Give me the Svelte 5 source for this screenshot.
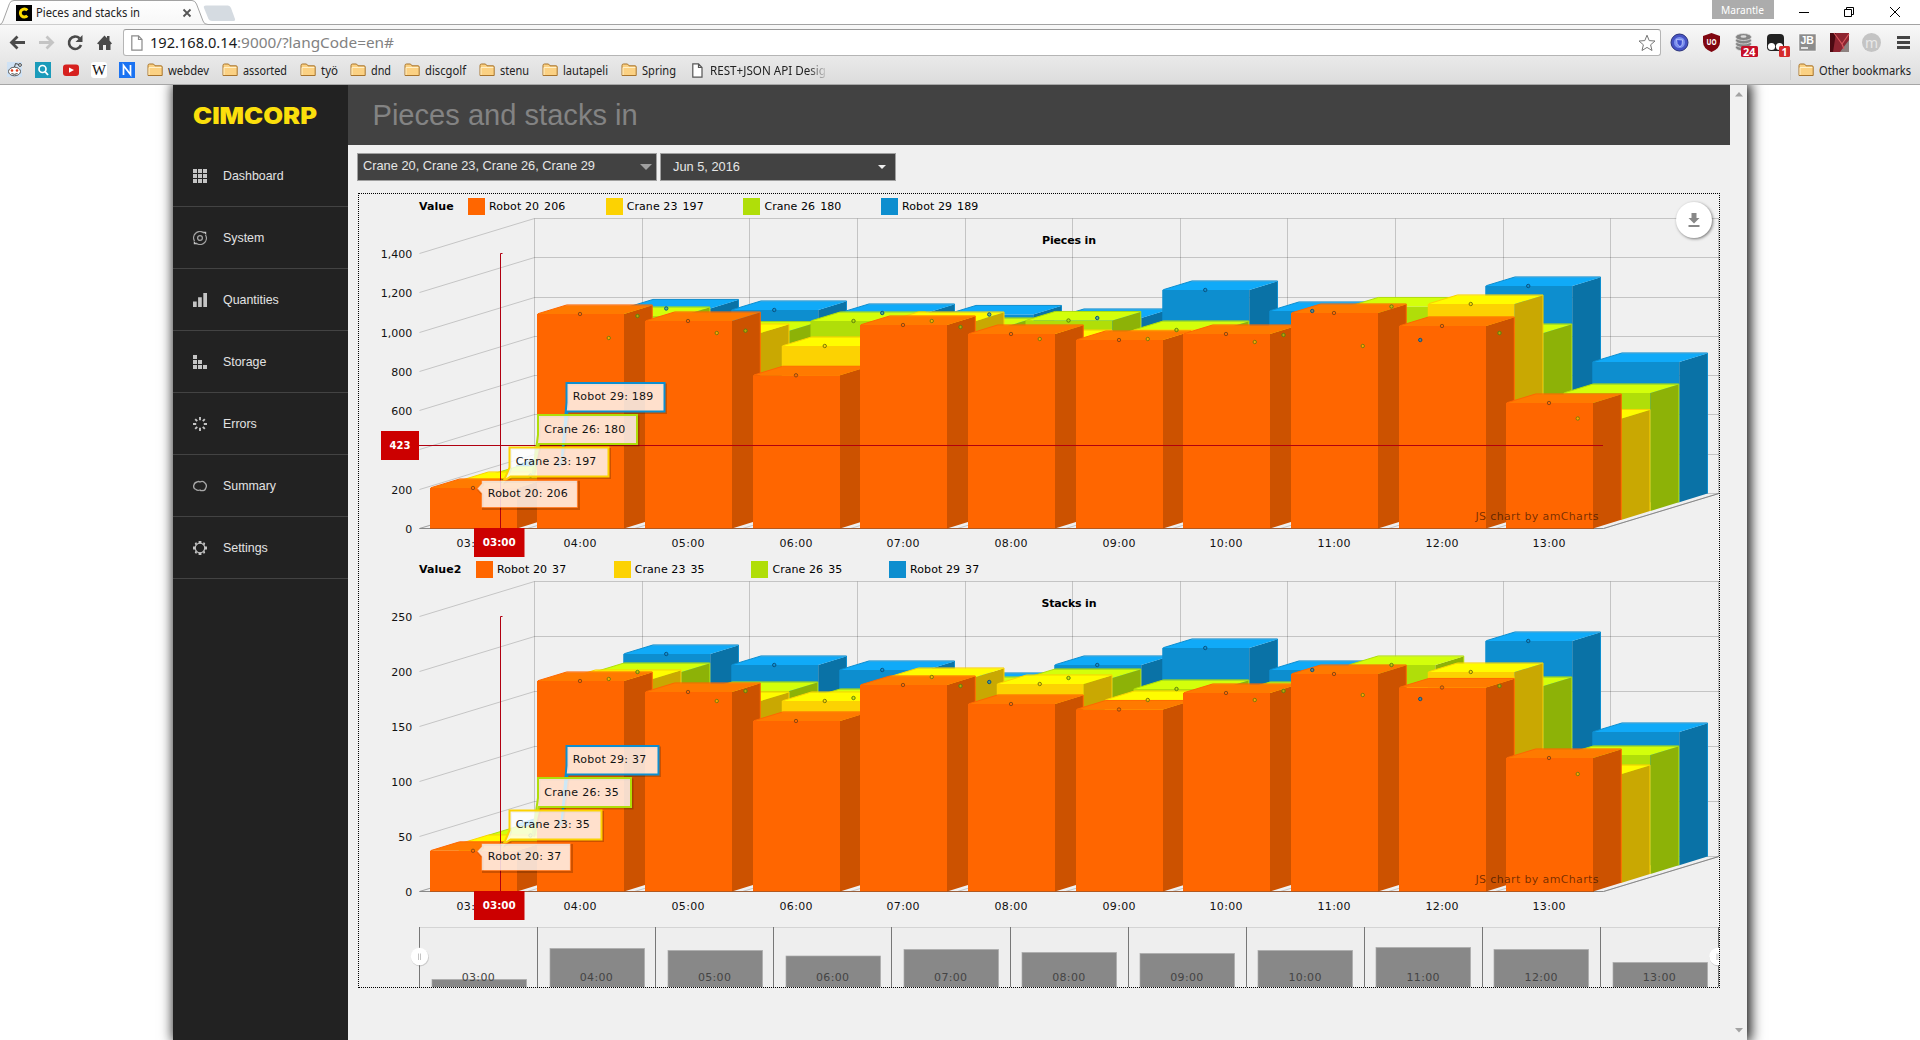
<script>
  const cols = [430, 537, 645, 753, 860, 968, 1076, 1183, 1291, 1399, 1506];
  const grid = [534.5, 642.5, 749.5, 857.5, 965.5, 1072.5, 1180.5, 1287.5, 1395.5, 1503.5, 1610.5, 1718.5];
  const hours = ['03:00', '04:00', '05:00', '06:00', '07:00', '08:00', '09:00', '10:00', '11:00', '12:00', '13:00'];
  const W = 87, DX = 28.75, DY = 8.75, BASE = 528.5, SPAN = 275;

  // front to back
  const series = [
    { name: 'Robot 20', front: '#ff6600', top: '#ff7a00', side: '#cc5200', dot: '#8f4a10' },
    { name: 'Crane 23', front: '#fcd202', top: '#fffc00', side: '#c9a802', dot: '#7d7a08' },
    { name: 'Crane 26', front: '#b0de09', top: '#d3ff0b', side: '#8db207', dot: '#5d8010' },
    { name: 'Robot 29', front: '#0d8ecf', top: '#10aaf8', side: '#0a72a6', dot: '#0b5482' }
  ];
  const order = [3, 2, 1, 0];

  const charts = [
    {
      label: 'Value', title: 'Pieces in', titleW: 54, max: 1400, step: 200, values: [206, 197, 180, 189], marker: 423,
      tops: [
        [488, 314, 321, 375.3, 325, 334, 340, 334, 313, 326, 403],
        [481, 338, 333, 346, 321, 339, 339, 342, 346, 304, 418.5],
        [475.6, 316, 330.7, 321, 327, 320.5, 330, 335, 306.5, 333, 393],
        [465, 308.5, 310, 313, 314.5, 318, 290, 311, 340, 286, 362]
      ],
      balloonW: [96, 99, 99, 98],
      balloonText: [80, 80.5, 81, 80.5]
    },
    {
      label: 'Value2', title: 'Stacks in', titleW: 55, max: 250, step: 50, values: [37, 35, 35, 37], marker: null,
      tops: [
        [487.8, 318, 329, 358, 322, 341, 346.5, 330, 311, 324.5, 395],
        [481, 316, 338, 338, 314, 321, 337, 337, 332, 309, 411],
        [472.5, 309, 328, 335, 323, 315, 326, 328, 302, 323, 392],
        [461.5, 291, 302, 307, 319, 302, 285, 307, 336, 278, 369]
      ],
      balloonW: [89, 92, 93, 92],
      balloonText: [73.5, 74, 74.5, 73.5]
    }
  ];
  const balloons = [
    { x: 481.5, y: 480.5, h: 27 },
    { x: 509.5, y: 447.5, h: 29 },
    { x: 538, y: 415, h: 29 },
    { x: 566.5, y: 383, h: 28.5 }
  ];
  const ticks = (c) => Array.from({ length: c.max / c.step + 1 }, (_, i) => ({
    v: i * c.step,
    y: Math.round(BASE - (i * c.step * SPAN) / c.max - 0.5) + 0.5
  }));
  const tail = (b, w, k, tx, ty) =>
    k === 0
      ? `M${b.x} ${b.y}H${b.x + w}V${b.y + b.h}H${b.x}V${b.y + 13}L${tx + 2} ${ty + 0.5}L${b.x} ${b.y + 3}Z`
      : `M${b.x} ${b.y}H${b.x + w}V${b.y + b.h}H${b.x + 1}L${tx} ${ty}L${b.x} ${b.y + b.h - 9}Z`;

  const scrollTops = [980, 949, 951, 956.5, 950, 953, 954, 951, 948, 950, 963];
  const menu = ['Dashboard', 'System', 'Quantities', 'Storage', 'Errors', 'Summary', 'Settings'];
  const marks = [
    ['webdev', 41, 13], ['assorted', 44, 13], ['työ', 17, 12], ['dnd', 20, 13],
    ['discgolf', 41, 13], ['stenu', 29, 13], ['lautapeli', 45, 13], ['Spring', 34, 16]
  ];
</script>

{#snippet fit(text, w, size, fill = '#222')}
  <svg class="fit" width={w + 1} height="20"><text x="0" y="14.5" font-size={size} {fill} textLength={w} lengthAdjust="spacingAndGlyphs">{text}</text></svg>
{/snippet}

{#snippet folder()}
  <svg class="ic" width="16" height="16" viewBox="0 0 16 16">
    <path d="M1 13.5V3.5Q1 2 2.500 2H6.500L8 3.800H14Q15.200 3.800 15.200 5V13.500H1Z" fill="#fbd183" stroke="#a8742c" />
    <path d="M2 13V5.500H14.300" fill="none" stroke="#fff0c8" />
  </svg>
{/snippet}

<div class="browser">
  <div class="tabs">
    <svg width="240" height="25" viewBox="0 0 240 25">
      <defs><linearGradient id="tabfill" x1="0" y1="0" x2="0" y2="1"><stop offset="0" stop-color="#fff" /><stop offset="1" stop-color="#f7f7f7" /></linearGradient></defs>
      <path d="M0 24.500Q2 24 3 21L9.500 3.500Q10.500.5 14 .5H192Q195 .5 196.500 4L203 21Q204 24.500 208 24.500H240V25H0Z" fill="url(#tabfill)" stroke="#a3a3a3" />
      <path d="M206 5.500H228Q230 5.500 231 8L235 19Q235.500 21 233 21H212Q209.500 21 208.500 19L204 8Q203 5.500 206 5.500Z" fill="#d5dbe1" />
      <rect x="16" y="5" width="16" height="16" fill="#000" />
      <path d="M27.300 10.300A4 4 0 1 0 27.300 15.700" fill="none" stroke="#fddb00" stroke-width="2.900" />
      <path d="M183.500 9.500L190.500 16.500M190.500 9.500L183.500 16.500" stroke="#555" stroke-width="1.800" />
      <text x="36" y="17" font-size="12" fill="#222" textLength="104" lengthAdjust="spacingAndGlyphs">Pieces and stacks in</text>
    </svg>
    <div class="grow strip"></div>
    <div class="strip badge-cell"><span class="user">{@render fit('Marantle', 43, 11.5, '#fff')}</span></div>
    <div class="strip controls">
      <svg width="146" height="24" viewBox="0 0 146 24" fill="none" stroke="#000">
        <path d="M25 12.500H35M70.500 9.500H77.500V16.500H70.500ZM72.500 9.500V7.500H79.500V14.500H77.500M116 7L126 17M126 7L116 17" />
      </svg>
    </div>
  </div>

  <div class="toolbar">
    <svg width="123" height="32" viewBox="0 25 123 32">
      <path d="M25 42.500H12M17.500 36.500L11.500 42.500L17.500 48.500" fill="none" stroke="#4a4a4a" stroke-width="2.800" />
      <path d="M39 42.500H52M46.500 36.500L52.500 42.500L46.500 48.500" fill="none" stroke="#c4c4c4" stroke-width="2.800" />
      <path d="M79.500 38.300A6.200 6.200 0 1 0 81 45" fill="none" stroke="#4a4a4a" stroke-width="2.600" />
      <path d="M82.500 35V42H75.500Z" fill="#4a4a4a" />
      <path d="M97 43.500L104.500 35.500L107 38V36H109.500V40.500L112 43.500L110.500 44.500V50H106V45H103V50H99V44.500Z" fill="#4a4a4a" />
    </svg>
    <div class="omnibox">
      <svg width="12" height="16" viewBox="0 0 12 16"><path d="M.8.8H7.500L11 4.500V15.200H.8ZM7.500.8V4.500H11" fill="#fff" stroke="#8a8a8a" stroke-width="1.200" /></svg>
      <svg class="url" width="250" height="24"><text y="17" font-size="15" fill="#1a1a1a" textLength="87" lengthAdjust="spacingAndGlyphs">192.168.0.14</text><text x="87" y="17" font-size="15" fill="#828282" textLength="157" lengthAdjust="spacingAndGlyphs">:9000/?langCode=en#</text></svg>
      <span class="grow"></span>
      <svg width="18" height="18" viewBox="0 0 18 18"><path d="M9 1.200L11.200 6.600L17 7L12.600 10.800L14 16.500L9 13.400L4 16.500L5.400 10.800L1 7L6.800 6.600Z" fill="#fff" stroke="#777" /></svg>
    </div>
    <svg width="259" height="32" viewBox="1661 25 259 32">
      <circle cx="1679.500" cy="42.500" r="8.500" fill="#4653c4" stroke="#273079" />
      <circle cx="1679.500" cy="42.500" r="5.500" fill="#7d92ee" />
      <path d="M1676.500 39.500L1682.500 40Q1683 45 1680 47Q1676 44 1676.500 39.500Z" fill="#3c4fd0" stroke="#c8d0ff" stroke-width=".8" />
      <path d="M1711.500 33L1720 36V42Q1720 48.500 1711.500 52Q1703 48.500 1703 42V36Z" fill="#800610" />
      <text x="1706.500" y="45.300" font-size="8.500" font-weight="700" fill="#fff" textLength="10" lengthAdjust="spacingAndGlyphs">UO</text>
      <g fill="#858585" stroke="#e0e0e0" stroke-width=".8">
        <ellipse cx="1743.500" cy="47.500" rx="8" ry="3.500" /><ellipse cx="1743.500" cy="44" rx="8" ry="3.500" /><ellipse cx="1743.500" cy="40.500" rx="8" ry="3.500" /><ellipse cx="1743.500" cy="37" rx="8" ry="3.500" />
      </g>
      <ellipse cx="1743.500" cy="36.500" rx="3" ry="1.200" fill="#ddd" />
      <rect x="1741" y="46" width="17" height="11" rx="1.500" fill="#c60f28" />
      <text x="1743" y="55.500" font-size="10.500" font-weight="700" fill="#fff" textLength="12.500" lengthAdjust="spacingAndGlyphs">24</text>
      <rect x="1767" y="34" width="17" height="17" rx="4" fill="#222" />
      <circle cx="1771.500" cy="46.500" r="3.600" fill="#fff" /><circle cx="1779.500" cy="46.500" r="3.600" fill="#fff" />
      <rect x="1779" y="46" width="11" height="11" rx="1.500" fill="#d52b2b" />
      <text x="1781.500" y="55.500" font-size="10.500" font-weight="700" fill="#fff">1</text>
      <rect x="1799" y="34" width="17" height="17" fill="#8c8c8c" stroke="#fff" stroke-width=".5" />
      <text class="sans" x="1800.500" y="44" font-size="10" font-weight="700" fill="#fff" textLength="13.500" lengthAdjust="spacingAndGlyphs">JB</text>
      <path d="M1801 48H1808" stroke="#fff" stroke-width="1.500" />
      <rect x="1830" y="33" width="19" height="19" fill="#8d2430" />
      <path d="M1840 52L1849 40V52Z" fill="#8e8280" /><path d="M1830 33H1836L1833 52H1830Z" fill="#4b0a12" />
      <path d="M1834 33L1842 44M1849 34L1842 44M1842 44L1844 49" stroke="#d8565c" fill="none" stroke-width="1.200" />
      <circle cx="1871.500" cy="42.500" r="9.500" fill="#c4c4c4" />
      <text x="1871.500" y="47.500" font-size="14" text-anchor="middle" fill="#e8e8e8">m</text>
      <path d="M1897 37.500H1910M1897 42.500H1910M1897 47.500H1910" stroke="#444" stroke-width="3" />
    </svg>
  </div>

  <div class="bookmarks">
    <svg class="sites" width="147" height="18" viewBox="0 61 147 18">
      <rect x="7" y="62" width="15" height="15" fill="#cfe2f5" />
      <ellipse cx="14.500" cy="71.500" rx="6" ry="4.300" fill="#fff" stroke="#555" /><circle cx="12" cy="70.500" r="1.300" fill="#e0391b" /><circle cx="17" cy="70.500" r="1.300" fill="#e0391b" />
      <path d="M11.500 73.500Q14.500 75.200 17.500 73.500M14.500 67L15.500 63.500L19 64.500" fill="none" stroke="#444" /><circle cx="20" cy="65" r="1.400" fill="#fff" stroke="#444" />
      <rect x="35" y="62" width="16" height="16" fill="#1b9bba" /><circle cx="42.500" cy="69" r="3.500" fill="none" stroke="#fff" stroke-width="1.700" /><path d="M45 71.500L48 75" stroke="#fff" stroke-width="1.900" />
      <rect x="63" y="64.500" width="16" height="11.500" rx="3" fill="#d6211f" /><path d="M69 67.500V72.700L74 70Z" fill="#fff" />
      <rect x="91" y="62" width="16" height="16" rx="3" fill="#fff" /><text class="serif" x="92" y="75" font-size="14" fill="#111" textLength="14" lengthAdjust="spacingAndGlyphs">W</text>
      <rect x="119" y="62" width="16" height="16" fill="#1b73f2" /><path d="M123.500 75V65.500L130.500 74.500V65" fill="none" stroke="#fff" stroke-width="1.700" />
    </svg>
    {#each marks as [name, w, gap]}
      <span class="mark" style:margin-right="{gap - 1}px">{@render folder()}{@render fit(name, w, 12)}</span>
    {/each}
    <svg width="11" height="15" viewBox="0 0 11 15"><path d="M.8.800H6.500L10 4.500V14.200H.8ZM6.500.8V4.500H10" fill="#fff" stroke="#555" stroke-width="1.200" /></svg>
    <span class="fade">{@render fit('REST+JSON API Desig', 116, 12)}</span>
    <span class="grow"></span>
    <span class="other">{@render folder()}{@render fit('Other bookmarks', 92, 12)}</span>
  </div>
</div>

<div class="viewport">
  <div class="page">
    <nav>
      <div class="logo"><svg width="125" height="20"><text x="0" y="18" textLength="124" lengthAdjust="spacingAndGlyphs">CIMCORP</text></svg></div>
      {#each menu as item, i}
        <div class="item">
          <svg width="14" height="14" viewBox="0 0 14 14" fill="#c4c4c4" stroke="none">
            {#if i === 0}
              <path d="M0 0H4V4H0ZM5 0H9V4H5ZM10 0H14V4H10ZM0 5H4V9H0ZM5 5H9V9H5ZM10 5H14V9H10ZM0 10H4V14H0ZM5 10H9V14H5ZM10 10H14V14H10Z" />
            {:else if i === 1}
              <g fill="none" stroke="#a4a4a4" stroke-width="1.300"><circle cx="7" cy="7" r="2.400" /><path d="M1.500 10A6.300 6.300 0 0 1 11 2M12.500 4A6.300 6.300 0 0 1 3 12" /></g>
              <path d="M10 0.800H13.200V4ZM.8 10V13.200H4Z" />
            {:else if i === 2}
              <path d="M0 8.500H3.700V14H0ZM5.100 4.200H8.800V14H5.100ZM10.300 0H14V14H10.300Z" />
            {:else if i === 3}
              <path d="M0 0H4V4H0ZM0 5H4V9H0ZM5 5H9V9H5ZM0 10H4V14H0ZM5 10H9V14H5ZM10 10H14V14H10Z" />
            {:else if i === 4}
              <path d="M7 0V3.200M7 10.800V14M0 7H3.200M10.800 7H14M2.200 2.200L4.200 4.200M9.800 9.800L11.800 11.800M11.800 2.200L9.800 4.200M4.200 9.800L2.200 11.800" stroke="#c4c4c4" stroke-width="1.900" />
            {:else if i === 5}
              <path d="M4 3Q5.500 2 7 3Q9.500 1.500 11.500 3.500Q14.500 6 12.800 9Q12 12 9.500 11.500Q8 12 7 11Q4.500 12 3 10.500Q0 9.500 .8 6.500Q1.300 3.500 4 3Z" fill="none" stroke="#a8a8a8" stroke-width="1.300" />
            {:else}
              <circle cx="7" cy="7" r="4.800" fill="none" stroke="#bbb" stroke-width="1.300" />
              <path d="M5.600 0H8.400V2.600H5.600ZM5.600 11.400H8.400V14H5.600ZM0 5.600H2.600V8.400H0ZM11.400 5.600H14V8.400H11.400ZM1.800 2L3.500 1.200L4 3.200L2.200 4ZM12.200 2L10.500 1.200L10 3.200L11.800 4ZM1.800 12L3.500 12.800L4 10.800L2.200 10ZM12.200 12L10.500 12.800L10 10.800L11.800 10Z" />
            {/if}
          </svg>
          <span>{item}</span>
        </div>
      {/each}
    </nav>

    <main>
      <header>Pieces and stacks in</header>
      <div class="filters">
        <div class="select cranes"><span>Crane 20, Crane 23, Crane 26, Crane 29</span><i></i></div>
        <div class="select date"><span>Jun 5, 2016</span><i></i></div>
      </div>

      <div class="panel">
        {#each charts as c, ci}
          <div class="legend" class:second={ci === 1}>
            <b>{c.label}</b>
            {#each series as s, k}
              <span class="entry"><i style:background={s.front}></i>{s.name}<em>{c.values[k]}</em></span>
            {/each}
          </div>
          <svg class="plot" width="1360" height="339" viewBox="359 218 1360 339">
            <g class="grid">
              {#each ticks(c) as t}
                <path d="M419.500 {t.y}L534.500 {t.y - 35}H1719" />
                <text class="num" x="412.300" y={t.y + 4} text-anchor="end">{t.v.toLocaleString('en-US')}</text>
              {/each}
              {#each grid as x}
                <path d="M{x} 218.500V493.500L{x - 115} 528.500" />
              {/each}
            </g>
            <path class="axis" d="M419.500 528.500H1603.500L1719 493.500" />
            {#each order as k}
              {@const s = series[k]}
              {#each cols as cx, i}
                {@const x = cx + k * DX}
                {@const y = c.tops[k][i]}
                {@const b = BASE - k * DY}
                <path d="M{x} {y}H{x + W}V{b}H{x}Z" fill={s.front} />
                <path d="M{x + W} {y}l{DX - 0.5} {-DY}V{b - DY}L{x + W} {b}Z" fill={s.side} />
                <path d="M{x} {y}l{DX} {-DY}h{W}l{-DX} {DY}Z" fill={s.top} />
                <path d="M{x + 1} {y - 0.3}l{DX} {-DY}h{W - 1.5}V{b - DY}" fill="none" stroke={s.front} stroke-width="1" />
              {/each}
            {/each}
            <path d="M430 528.500H1594" stroke="#a84000" stroke-opacity=".55" />
            {#each order as k}
              {#each cols as cx, i}
                {@const x = cx + k * DX + 43}
                {#if x < 1604}
                  <circle cx={x} cy={c.tops[k][i]} r="1.700" fill={series[k].front} fill-opacity=".6" stroke={series[k].dot} stroke-width="1" />
                {/if}
              {/each}
            {/each}
            {#each cols as cx, i}
              <text class="num" x={cx + 43} y="546.500" text-anchor="middle" textLength="33">{hours[i]}</text>
            {/each}
            <text class="title" x="1069" y="243.500" text-anchor="middle" textLength={c.titleW}>{c.title}</text>
            <text class="credit" x="1475.500" y="519.500" textLength="123">JS chart by amCharts</text>
            <path class="cursor" d="M502.500 253.500H500.500V528" />
            {#if c.marker}
              <path class="cursor" d="M419 445.500H1603" />
              <rect x="381" y="431" width="38" height="29" fill="#c00" />
              <text class="flag" x="400" y="448.500" text-anchor="middle" textLength="21" lengthAdjust="spacingAndGlyphs">{c.marker}</text>
            {/if}
            <rect x="474" y="528" width="50.500" height="29" fill="#c00" />
            <text class="flag" x="499.300" y="545.700" text-anchor="middle" textLength="33" lengthAdjust="spacingAndGlyphs">03:00</text>
            {#each order as k}
              {@const b = balloons[k]}
              {@const w = c.balloonW[k]}
              {@const d = tail(b, w, k, 473 + k * DX + 2, c.tops[k][0])}
              <path {d} class="shadow" transform="translate(1.5 1.500)" />
              <path {d} fill="#fff" fill-opacity=".8" stroke={series[k].front} stroke-width={k === 0 ? 1.2 : 2} stroke-opacity={k === 0 ? 0.55 : 1} />
              <text class="num" x={b.x + 6.3} y={b.y + b.h / 2 + 3} textLength={c.balloonText[k]}>{series[k].name}: {c.values[k]}</text>
            {/each}
          </svg>
        {/each}

        <svg class="overview" width="1360" height="67" viewBox="359 920 1360 67">
          <rect x="419.500" y="927" width="1300" height="60" fill="#eee" />
          <path d="M419.500 927.500H1719" stroke="#d4d4d4" />
          {#each hours as h, i}
            {@const x = 419.5 + i * 118.1}
            <rect x={Math.round(x + 12)} y={scrollTops[i] - 0.5} width="94.500" height="50" fill="#888" stroke="#aaa" stroke-width=".7" />
            <path d="M{Math.floor(x) + 0.5} 927V987" stroke="#777" />
            <text class="num dim" x={x + 58.7} y="981" text-anchor="middle" textLength="33">{h}</text>
          {/each}
          <path d="M1718.500 927V987" stroke="#777" />
          {#each [419.5, 1718] as x}
            <circle cx={x + 0.5} cy="957.500" r="9" fill="#000" fill-opacity=".14" />
            <circle cx={x} cy="956.500" r="8.700" fill="#fff" />
            <path d="M{x - 1} 953.500V960M{x + 1} 953.500V960" stroke="#c4c4c4" />
          {/each}
        </svg>
        <button class="export" aria-label="Download">
          <svg width="12" height="15" viewBox="0 0 12 15" fill="#888"><path d="M3.500 0H8.500V5H11.500L6 10.500L.5 5H3.500ZM.5 12H11.500V14H.5Z" /></svg>
        </button>
      </div>
    </main>

    <div class="scroll">
      <svg width="8" height="5"><path d="M0 4.500L4 0L8 4.500Z" fill="#a3a3a3" /></svg>
      <svg width="8" height="5"><path d="M0 0L4 4.500L8 0Z" fill="#a3a3a3" /></svg>
    </div>
  </div>
</div>

<style>
  :global(body) { background: #fff; overflow: hidden; font-family: 'Liberation Sans', Arial, sans-serif; }
  svg { display: block; flex: none; }
  .fit, .url, .logo svg { overflow: visible; }
  .grow { flex: 1; }
  .browser { height: 85px; box-sizing: border-box; border-bottom: 1px solid #a6a6a6; font-family: 'Noto Sans', sans-serif; background: linear-gradient(#fff 0, #fff 24px, #f8f8f8 25px, #dcdcdc 84px); }
  .tabs { display: flex; height: 25px; }
  .strip { border-bottom: 1px solid #a3a3a3; background: #fff; }
  .badge-cell { width: 62px; }
  .user { display: flex; justify-content: center; height: 19px; background: #acacac; }
  .user .fit { margin-top: -1.500px; }
  .controls { width: 146px; }
  .toolbar { display: flex; height: 32px; }
  .omnibox { display: flex; align-items: center; flex: 1; height: 27px; margin-top: 4px; box-sizing: border-box; padding: 0 4px 0 7px; background: #fff; border: 1px solid #b5b5b5; border-top-color: #999; border-radius: 3px; }
  .url { margin-left: 7px; }
  .serif { font-family: 'Liberation Serif', serif; }
  .sans { font-family: 'Liberation Sans', sans-serif; }
  .bookmarks { display: flex; align-items: center; height: 26px; box-sizing: border-box; }
  .mark, .other { display: flex; align-items: center; gap: 5px; }
  .other { border-left: 1px solid #cfcfcf; padding: 0 8px 0 7px; }
  .fade { margin-left: 7px; -webkit-mask-image: linear-gradient(90deg, #000 98px, transparent 118px); mask-image: linear-gradient(90deg, #000 98px, transparent 118px); }
  .viewport { height: 955px; overflow: hidden; }
  .page { display: flex; width: 1574px; height: 955px; margin-left: 173px; box-shadow: 2px 0 12px 2px rgba(0, 0, 0, .9); background: #f0f0f0; }
  nav { width: 175px; background: #222; }
  .logo { height: 60px; box-sizing: border-box; padding: 21px 0 0 20px; }
  .logo text { font: 900 22.800px Inter, sans-serif; fill: #fbdf0c; }
  .item { display: flex; align-items: center; height: 62px; box-sizing: border-box; border-bottom: 1px solid #434343; padding-left: 20px; color: #e2e2e2; font-size: 12.400px; }
  .item span { margin-left: 16px; }
  main { width: 1382px; }
  header { height: 60px; line-height: 60px; padding-left: 24.500px; background: #424242; color: #838383; font-size: 29.100px; }
  .filters { display: flex; gap: 3px; padding: 8px 0 0 9px; height: 48px; box-sizing: border-box; }
  .select { display: flex; justify-content: space-between; height: 28px; box-sizing: border-box; background: #424242; border: 1px solid #a0a0a0; color: #e6e6e6; font-size: 12.800px; line-height: 23px; }
  .cranes { width: 300px; padding: 0 4px 0 5px; }
  .date { width: 236px; padding: 0 9px 0 12px; line-height: 25px; }
  .select i { width: 0; height: 0; align-self: center; border: 6px solid transparent; border-top-color: #a0a0a0; border-bottom: 0; }
  .date i { border-width: 4px 4px 0; border-top-color: #eee; }
  .panel { position: relative; width: 1362px; height: 795px; box-sizing: border-box; margin-left: 10px; border: 1px dotted #000; font: 11px 'DejaVu Sans', Verdana, sans-serif; color: #000; }
  .legend { display: flex; align-items: center; height: 24px; padding-top: 1px; box-sizing: border-box; padding-left: 60px; letter-spacing: .08px; }
  .legend b { width: 49px; }
  .legend.second b { width: 57px; }
  .entry { display: flex; align-items: center; width: 137.700px; }
  .entry i { width: 17px; height: 17px; margin-right: 4px; }
  .entry em { font-style: normal; margin-left: 5px; }
  .grid path { fill: none; stroke: #000; stroke-opacity: .18; }
  .axis { fill: none; stroke: #888; }
  .plot text, .overview text { font-size: 11px; }
  .num { fill: #111; }
  .dim { fill: #444; }
  .title { font-weight: 700; }
  .credit { fill: #000; fill-opacity: .55; }
  .flag { font-weight: 700; fill: #fff; }
  .cursor { fill: none; stroke: #b00010; }
  .shadow { fill: none; stroke: #000; stroke-opacity: .2; stroke-width: 2; }
  .export { position: absolute; right: 7px; top: 8px; width: 36px; height: 36px; padding: 0; border: 0; border-radius: 50%; background: #fff; box-shadow: 1px 1px 3px rgba(0, 0, 0, .5); display: flex; align-items: center; justify-content: center; }
  .scroll { display: flex; flex-direction: column; align-items: center; justify-content: space-between; width: 17px; box-sizing: border-box; padding: 7px 0; background: #f1f1f1; }
</style>
